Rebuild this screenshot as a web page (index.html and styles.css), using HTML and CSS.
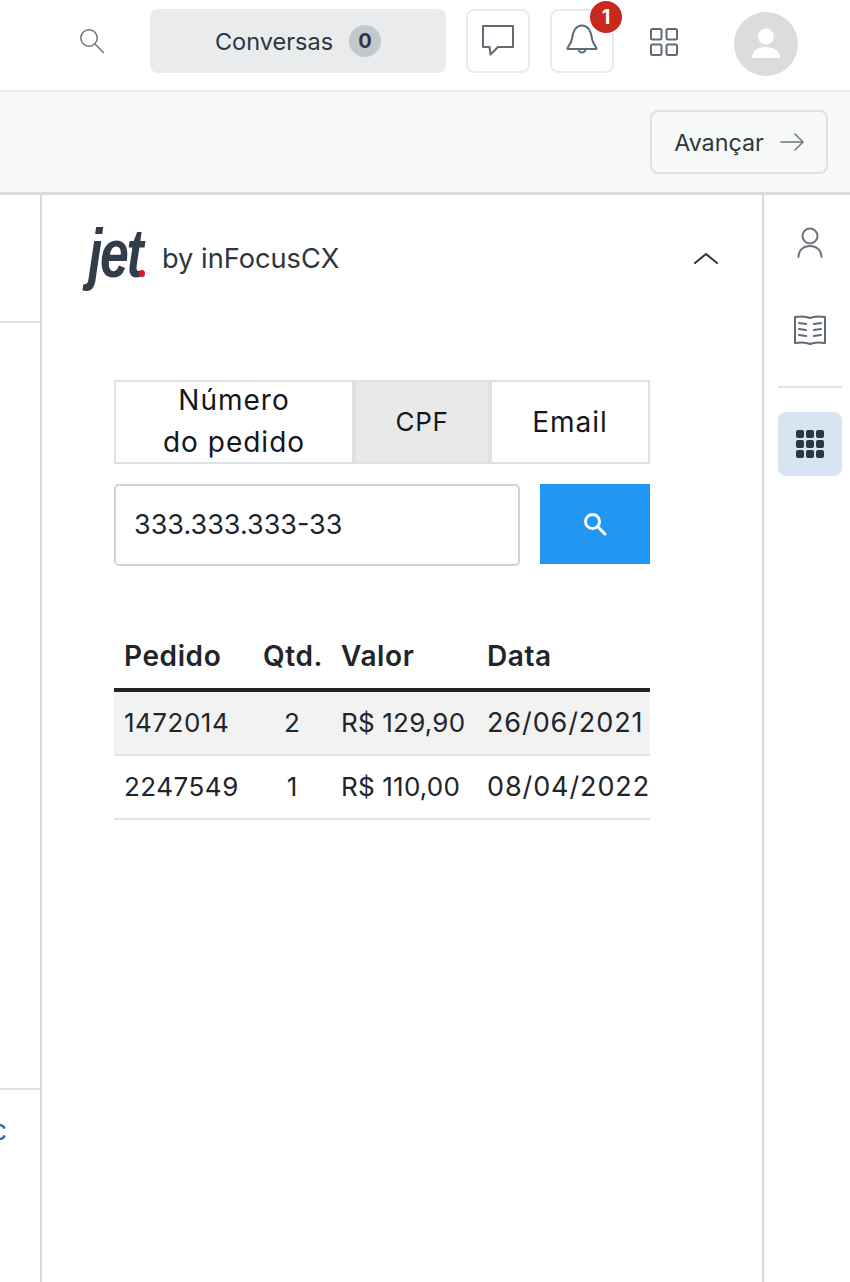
FILE: index.html
```html
<!DOCTYPE html>
<html lang="pt-BR">
<head>
<meta charset="utf-8">
<title>Jet by inFocusCX</title>
<link rel="stylesheet" href="styles.css">
</head>
<body>
<header class="topbar">
  <button class="plain search-top" aria-label="Buscar">
    <svg width="26" height="26" viewBox="0 0 26 26" fill="none" stroke="#6c757d" stroke-width="1.5" stroke-linecap="round"><circle cx="10" cy="10" r="8.2"/><path d="M16 16l8.500 8.500"/></svg>
  </button>
  <button class="conversas">Conversas <span class="count">0</span></button>
  <button class="square chat" aria-label="Chat">
    <svg width="34" height="34" viewBox="0 0 34 34" fill="none" stroke="#5f6b76" stroke-width="2" stroke-linejoin="round"><path d="M2 2h30v21H17l-7.500 7.500-1-7.500H2z"/></svg>
  </button>
  <button class="square bell" aria-label="Notificações">
    <svg width="34" height="34" viewBox="0 0 34 34" fill="none" stroke="#5f6b76" stroke-width="2" stroke-linejoin="round"><path d="M2.500 25c-1-1.500 3-3.500 4.500-10C8 7 11 1.500 17 1.500S26 7 27 15c1.500 6.500 5.500 8.500 4.500 10z"/><path d="M13.500 25a3.500 3.500 0 0 0 7 0"/></svg>
    <span class="notif">1</span>
  </button>
  <button class="plain apps" aria-label="Aplicativos">
    <svg width="28" height="28" viewBox="0 0 28 28" fill="none" stroke="#5f6b76" stroke-width="2"><rect x="1" y="1" width="10.500" height="10.500" rx="1.500"/><rect x="16.500" y="1" width="10.500" height="10.500" rx="1.500"/><rect x="1" y="16.500" width="10.500" height="10.500" rx="1.500"/><rect x="16.500" y="16.500" width="10.500" height="10.500" rx="1.500"/></svg>
  </button>
  <div class="avatar">
    <svg width="30" height="32" viewBox="0 0 30 32" fill="#fff"><circle cx="15" cy="8.500" r="8"/><path d="M1 30c0-7 6-11 14-11s14 4 14 11z"/></svg>
  </div>
</header>

<div class="actionbar">
  <button class="next">Avançar
    <svg width="24" height="18" viewBox="0 0 24 18" fill="none" stroke="#6c757d" stroke-width="1.500" stroke-linecap="round" stroke-linejoin="round"><path d="M1 9h22M15 1l8 8-8 8"/></svg>
  </button>
</div>

<main class="layout">
  <aside class="left">
    <div class="left-top"></div>
    <div class="left-mid"></div>
    <div class="left-foot"><span class="cut">Sync</span></div>
  </aside>

  <section class="panel">
    <div class="brand">
      <div class="logo"><span class="jet">jet</span><span class="dot"></span></div>
      <span class="by">by inFocusCX</span>
      <svg class="chevron" width="24" height="12" viewBox="0 0 24 12" fill="none" stroke="#2b3640" stroke-width="2" stroke-linecap="round"><path d="M1 11L12 2l11 9"/></svg>
    </div>

    <div class="content">
      <div class="tabs">
        <button class="tab tab-order"><span class="tab-label">Número<br>do pedido</span></button>
        <button class="tab tab-cpf">CPF</button>
        <button class="tab tab-email">Email</button>
      </div>

      <div class="search-row">
        <div class="field">333.333.333-33</div>
        <button class="go" aria-label="Pesquisar">
          <svg width="26" height="26" viewBox="0 0 26 26" fill="none" stroke="#fff" stroke-width="3" stroke-linecap="round"><circle cx="10.500" cy="10.500" r="7"/><path d="M16 16l7 7"/></svg>
        </button>
      </div>

      <table class="orders">
        <colgroup><col class="c1"><col class="c2"><col class="c3"><col class="c4"></colgroup>
        <thead>
          <tr><th>Pedido</th><th>Qtd.</th><th>Valor</th><th>Data</th></tr>
        </thead>
        <tbody>
          <tr class="selected"><td class="code">1472014</td><td class="qty">2</td><td class="price">R$ 129,90</td><td class="date">26/06/2021</td></tr>
          <tr><td class="code">2247549</td><td class="qty">1</td><td class="price">R$ 110,00</td><td class="date">08/04/2022</td></tr>
        </tbody>
      </table>
    </div>
  </section>

  <nav class="rail">
    <button class="rail-btn" aria-label="Perfil">
      <svg width="28" height="32" viewBox="0 0 28 32" fill="none" stroke="#6c757d" stroke-width="2" stroke-linecap="round"><circle cx="14" cy="9" r="7.500"/><path d="M2.500 30c0-7 5-11 11.500-11s11.500 4 11.500 11"/></svg>
    </button>
    <button class="rail-btn" aria-label="Guia">
      <svg width="34" height="32" viewBox="0 0 34 32" fill="none" stroke="#5f6b76" stroke-width="2" stroke-linejoin="round"><path d="M2 3c6-1 11-1 15 1 4-2 9-2 15-1v26c-6-1-11-1-15 1-4-2-9-2-15-1z"/><path d="M6 9l7 1M6 15l7 1M6 21l7 1M28 9l-7 1M28 15l-7 1M28 21l-7 1" stroke-linecap="round"/></svg>
    </button>
    <div class="rail-line"></div>
    <button class="rail-active" aria-label="Aplicações">
      <span></span><span></span><span></span><span></span><span></span><span></span><span></span><span></span><span></span>
    </button>
  </nav>
</main>
</body>
</html>
```

FILE: styles.css
```css
* { box-sizing: border-box; }
html, body { margin: 0; height: 1282px; overflow: hidden; background: #fff; }
body { font-family: "Inter", "Liberation Sans", sans-serif; color: #2b3640; }
button { font: inherit; color: inherit; background: none; border: 0; padding: 0; margin: 0; }

.topbar { height: 92px; border-bottom: 2px solid #e9ecef; display: flex; align-items: flex-start; padding: 9px 52px 0 0; justify-content: flex-end; position: relative; }
.plain { display: flex; }
.search-top { margin-top: 19px; margin-right: 45px; }
.conversas { width: 296px; height: 64px; background: #e9ebed; border-radius: 8px; font-size: 23.500px; display: flex; align-items: center; justify-content: center; gap: 16px; margin-right: 20px; }
.count { width: 32px; height: 32px; border-radius: 50%; background: #c3c8cc; font-size: 20px; font-weight: 700; display: flex; align-items: center; justify-content: center; }
.square { width: 64px; height: 64px; border: 2px solid #e9ecef; border-radius: 8px; display: flex; align-items: center; justify-content: center; position: relative; }
.chat { margin-right: 20px; }
.bell { margin-right: 36px; }
.notif { position: absolute; top: -10px; right: -10px; width: 32px; height: 32px; border-radius: 50%; background: #c8281e; color: #fff; font-size: 20px; font-weight: 700; display: flex; align-items: center; justify-content: center; }
.apps { margin-top: 19px; margin-right: 56px; }
.avatar { width: 64px; height: 64px; margin-top: 3px; border-radius: 50%; background: #dcdcdc; display: flex; align-items: center; justify-content: center; }

.actionbar { height: 103px; background: #f7f9f9; border-bottom: 3px solid #d9dde1; display: flex; justify-content: flex-end; align-items: flex-start; padding: 18px 22px 0 0; }
.next { width: 178px; height: 64px; border: 2px solid #dee2e6; border-radius: 8px; font-size: 23.300px; display: flex; align-items: center; justify-content: center; gap: 16px; }

.layout { display: flex; height: 1087px; }
.left { width: 42px; border-right: 2px solid #d5d9de; display: flex; flex-direction: column; overflow: hidden; }
.left-top { height: 128px; border-bottom: 2px solid #dee2e6; }
.left-mid { height: 767px; border-bottom: 2px solid #dee2e6; }
.left-foot { flex: 1; display: flex; justify-content: flex-end; padding: 24px 33px 0 0; }
.cut { font-size: 28px; line-height: 32px; color: #1a6fb5; white-space: nowrap; }

.panel { width: 720px; }
.brand { height: 126px; padding: 31px 44px 0 41px; display: flex; align-items: flex-start; }
.logo { width: 63px; height: 64px; position: relative; flex: none; margin-right: 16px; }
.jet { position: absolute; left: 5px; top: -13px; font-family: "Liberation Sans", sans-serif; font-size: 68px; line-height: 80px; font-weight: 700; font-style: italic; letter-spacing: -3px; color: #323d4a; transform: scaleX(.76); transform-origin: 0 50%; }
.dot { position: absolute; left: 56px; top: 44px; width: 6px; height: 7px; border-radius: 50%; background: #e8131b; }
.by { font-size: 27.200px; line-height: 32px; margin-top: 17px; flex: 1; }
.chevron { margin-top: 26px; }

.content { padding: 59px 112px 0 72px; }
.tabs { display: flex; height: 84px; }
.tab { border: 2px solid #dee2e6; background: #fff; font-size: 28px; letter-spacing: 1px; line-height: 42px; color: #14161f; text-align: center; }
.tab-order { width: 240px; }
.tab-label { display: block; margin-top: -3px; }
.tab-cpf { width: 136px; background: #e9e9e9; font-size: 26px; letter-spacing: .7px; }
.tab-email { width: 160px; }

.search-row { display: flex; justify-content: space-between; align-items: flex-start; margin-top: 20px; }
.field { width: 406px; height: 82px; border: 2px solid #ced4da; border-radius: 5px; padding: 0 18px; font-size: 27px; line-height: 78px; color: #212529; }
.go { width: 110px; height: 80px; background: #2196f3; display: flex; align-items: center; justify-content: center; }

.orders { width: 536px; margin-top: 50px; border-collapse: collapse; table-layout: fixed; font-size: 26px; color: #212529; }
.c1 { width: 139px; } .c2 { width: 78px; } .c3 { width: 146px; } .c4 { width: 173px; }
.orders th, .orders td { padding: 0 0 0 10px; text-align: left; white-space: nowrap; }
.orders th { height: 74px; padding-top: 8px; font-weight: 600; font-size: 28px; letter-spacing: .6px; border-bottom: 4px solid #212529; }
.orders td { height: 64px; padding-bottom: 2px; border-bottom: 2px solid #dee2e6; }
.orders .selected td { height: 65px; background: #f2f2f2; }
.orders .qty { text-align: center; padding: 0 0 2px; }
.orders .code { letter-spacing: .5px; }
.orders .price { letter-spacing: .2px; }
.orders .date { font-size: 27px; letter-spacing: .9px; }

.rail { flex: 1; border-left: 2px solid #d5d9de; padding: 0 8px 0 14px; display: flex; flex-direction: column; align-items: center; }
.rail-btn { display: flex; margin-top: 32px; }
.rail-btn + .rail-btn { margin-top: 55px; }
.rail-line { width: 64px; height: 2px; background: #dee2e6; margin-top: 40px; }
.rail-active { width: 64px; height: 64px; margin-top: 24px; background: #d7e4f1; border-radius: 8px; display: grid; grid-template-columns: repeat(3, 8px); grid-auto-rows: 8px; gap: 2px; justify-content: center; align-content: center; }
.rail-active span { background: #2b3640; border-radius: 2px; }
```
